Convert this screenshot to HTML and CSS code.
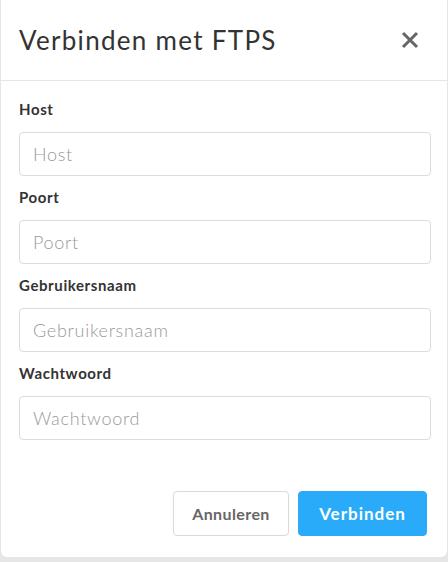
FILE: index.html
```html
<!DOCTYPE html>
<html lang="nl">
<head>
<meta charset="utf-8">
<title>Verbinden met FTPS</title>
<link rel="stylesheet" href="styles.css">
</head>
<body>
<div class="modal">
  <div class="modal-header">
    <h2 class="modal-title">Verbinden met FTPS</h2>
    <button class="close" type="button" aria-label="Sluiten">
      <svg width="18" height="18" viewBox="0 0 18 18"><path d="M2 2 L16 16 M16 2 L2 16" stroke="#666" stroke-width="3" stroke-linecap="butt" fill="none"/></svg>
    </button>
  </div>
  <div class="modal-body">
    <div class="field">
      <label class="label">Host</label>
      <input class="input" type="text" placeholder="Host">
    </div>
    <div class="field">
      <label class="label">Poort</label>
      <input class="input" type="text" placeholder="Poort">
    </div>
    <div class="field">
      <label class="label">Gebruikersnaam</label>
      <input class="input" type="text" placeholder="Gebruikersnaam">
    </div>
    <div class="field">
      <label class="label">Wachtwoord</label>
      <input class="input" type="password" placeholder="Wachtwoord">
    </div>
  </div>
  <div class="modal-footer">
    <button class="btn btn-default" type="button">Annuleren</button>
    <button class="btn btn-primary" type="button">Verbinden</button>
  </div>
</div>
</body>
</html>
```
FILE: styles.css
```css
html, body {
  margin: 0;
  padding: 0;
}
body {
  background: #e6e6e6;
  width: 448px;
  height: 562px;
  overflow: hidden;
  font-family: "Lato", "Open Sans", sans-serif;
}
.modal {
  box-sizing: border-box;
  margin: -6px 0 0 1px;
  width: 446px;
  height: 563px;
  background: #fff;
  border-radius: 6px;
  display: flex;
  flex-direction: column;
}
.modal-header {
  display: flex;
  align-items: center;
  justify-content: space-between;
  height: 87px;
  box-sizing: border-box;
  padding: 6px 28px 0 18px;
  border-bottom: 1px solid #e5e5e5;
}
.modal-title {
  margin: 0;
  font-family: "Lato", sans-serif;
  font-weight: 400;
  font-size: 26px;
  color: #333;
  letter-spacing: 1.3px;
}
.close {
  border: 0;
  background: none;
  padding: 0;
  width: 18px;
  height: 18px;
  display: flex;
}
.modal-body {
  padding: 18px 16px 0 18px;
  display: flex;
  flex-direction: column;
}
.field {
  display: flex;
  flex-direction: column;
  margin-bottom: 11px;
}
.label {
  font-weight: 700;
  font-size: 15px;
  line-height: 20px;
  color: #333;
  margin-bottom: 13px;
  letter-spacing: 0.6px;
}
.input {
  box-sizing: border-box;
  height: 44px;
  width: 412px;
  border: 1px solid #dcdcdc;
  border-radius: 4px;
  padding: 0 13px;
  font-family: "Lato", sans-serif;
  font-size: 18px;
  font-weight: 300;
  letter-spacing: 0.7px;
  color: #333;
  outline: none;
}
.input::placeholder {
  color: #999;
}
.modal-footer {
  margin-top: auto;
  display: flex;
  justify-content: flex-end;
  gap: 9px;
  padding: 0 20px 21px 0;
}
.btn {
  box-sizing: border-box;
  height: 45px;
  border-radius: 4px;
  font-family: "Lato", sans-serif;
  font-weight: 700;
  cursor: pointer;
}
.btn-default {
  width: 116px;
  background: #fff;
  border: 1px solid #dadada;
  color: #666;
  font-size: 16px;
  letter-spacing: 0.4px;
}
.btn-primary {
  width: 129px;
  background: #29abf9;
  border: 1px solid #29abf9;
  color: #fff;
  font-size: 17px;
  letter-spacing: 1px;
}
```
